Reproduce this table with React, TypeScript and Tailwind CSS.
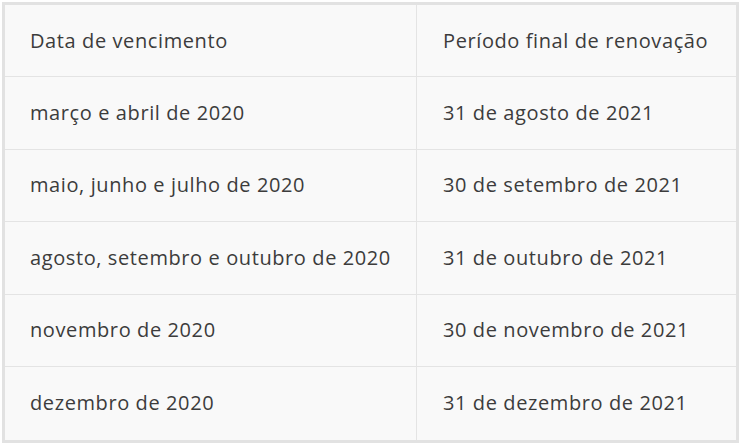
const rows: [string, string][] = [
  ['março e abril de 2020', '31 de agosto de 2021'],
  ['maio, junho e julho de 2020', '30 de setembro de 2021'],
  ['agosto, setembro e outubro de 2020', '31 de outubro de 2021'],
  ['novembro de 2020', '30 de novembro de 2021'],
  ['dezembro de 2020', '31 de dezembro de 2021'],
];

export default function App() {
  return (
    <div className="w-[741px] h-[444px] bg-white p-[2px]" style={{ fontFamily: '"Open Sans", sans-serif' }}>
      <div className="border-[3px] border-[#e2e2e2] bg-[#f9f9f9] text-[#3c3c3c] text-[20px] tracking-[0.6px]">
        <div className="grid grid-cols-[412px_1fr] h-[72px] border-b border-[#e4e4e4]">
          <div className="flex items-center pl-[25px] border-r border-[#e4e4e4]">Data de vencimento</div>
          <div className="flex items-center pl-[26px]">Período final de renovação</div>
        </div>
        {rows.map(([a, b], i) => (
          <div
            key={a}
            className={`grid grid-cols-[412px_1fr] h-[72.5px] ${i < rows.length - 1 ? 'border-b border-[#e4e4e4]' : ''}`}
          >
            <div className="flex items-center pl-[25px] border-r border-[#e4e4e4]">{a}</div>
            <div className="flex items-center pl-[26px]">{b}</div>
          </div>
        ))}
      </div>
    </div>
  );
}
